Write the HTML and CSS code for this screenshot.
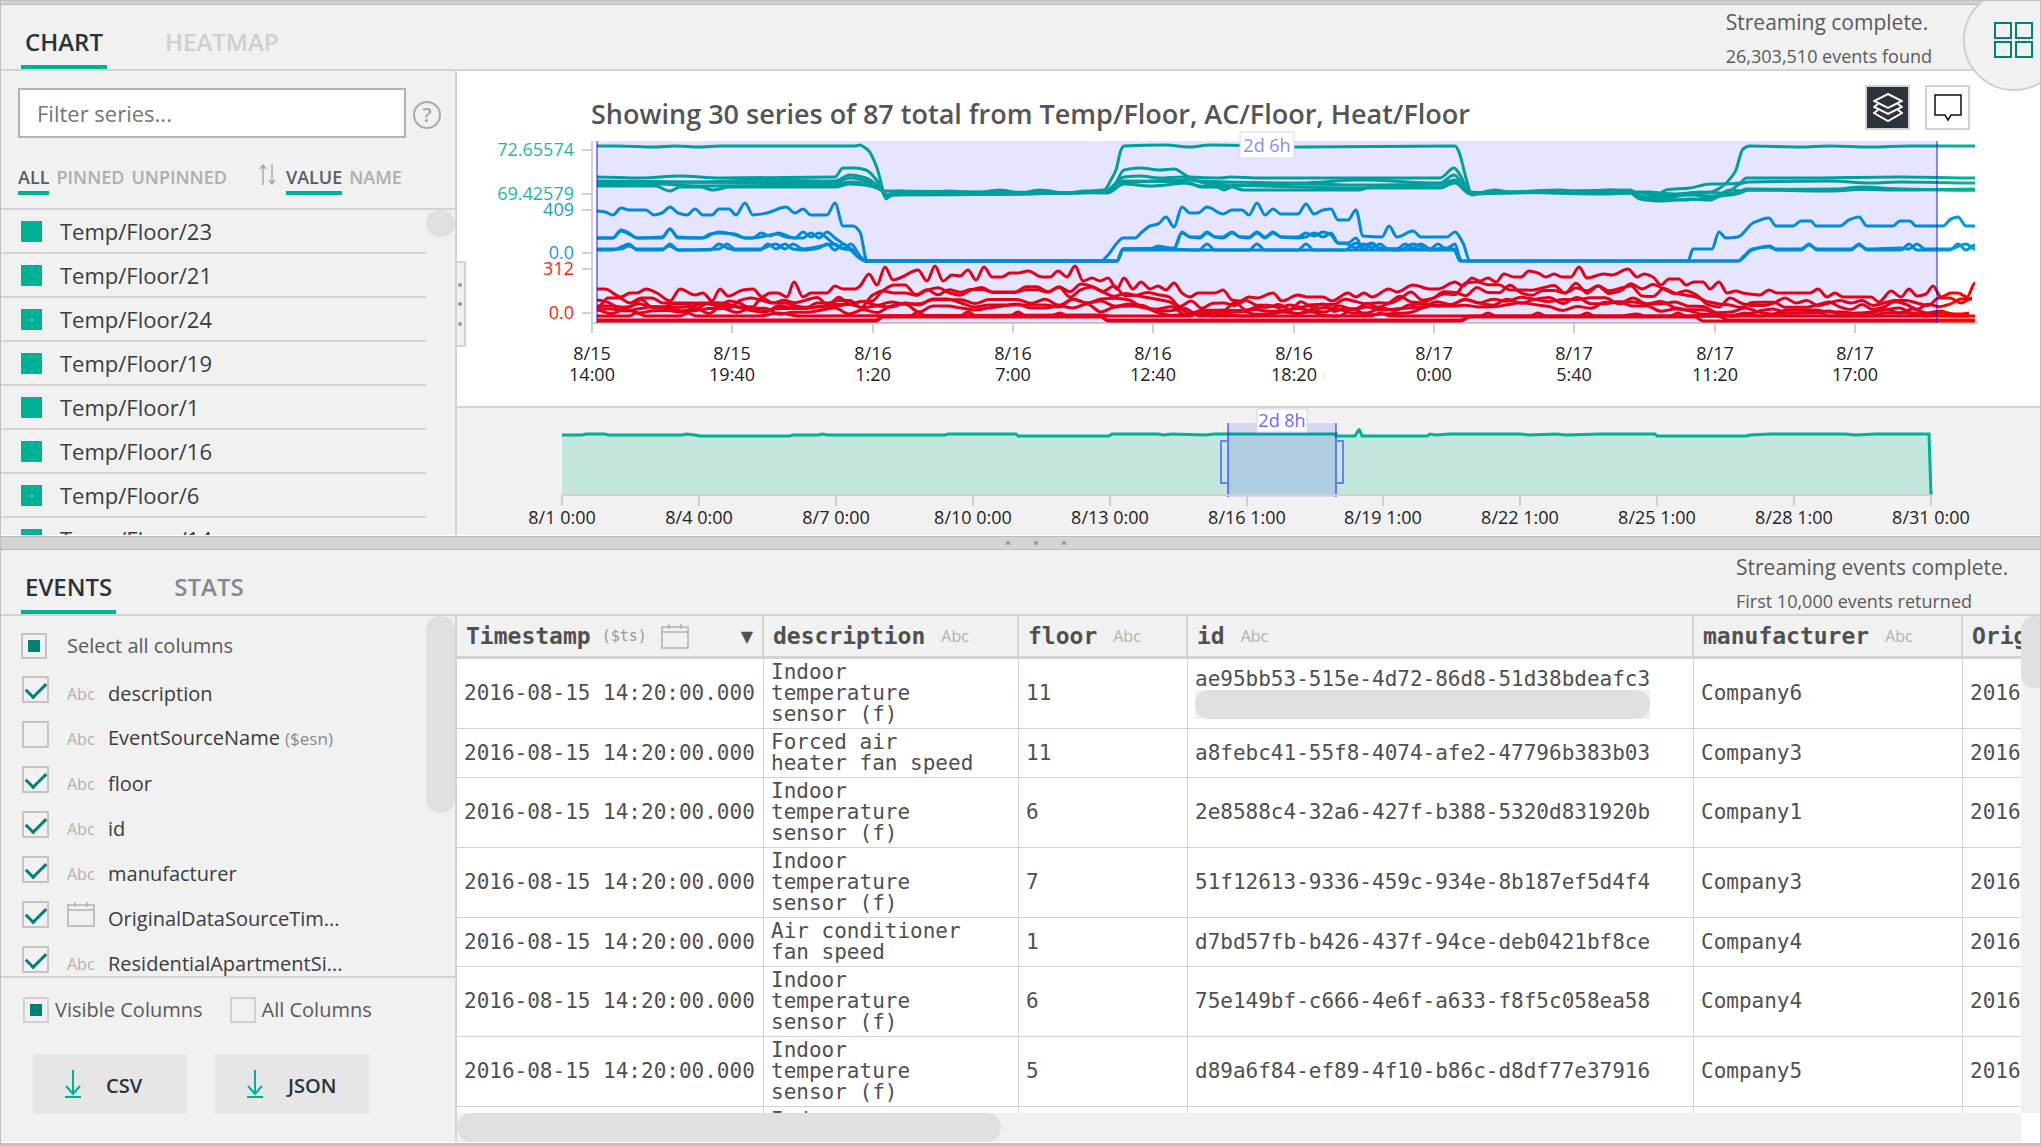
FILE: index.html
```html
<!DOCTYPE html>
<html lang="en">
<head>
<meta charset="utf-8">
<title>Explorer</title>
<link rel="stylesheet" href="styles.css">
</head>
<body>
<svg class="sprite" aria-hidden="true">
  <symbol id="calendar" viewBox="0 0 28 25"><path d="M1 3h26v21H1zM1 8h26M8 0v5M20 0v5"/></symbol>
  <symbol id="download" viewBox="0 0 16 28"><path d="M8 0v24M1 16l7 8 7-8M0 27h16"/></symbol>
</svg>
<div class="app">
  <div class="topbar"></div>
  <section class="pane pane-chart">
    <header class="pane-head">
      <nav class="tabs">
        <button class="tab active">CHART</button>
        <button class="tab faint">HEATMAP</button>
      </nav>
      <div class="status status-chart"><p>Streaming complete.</p><p class="sub">26,303,510 events found</p></div>
    </header>
    <div class="pane-body">
      <aside class="side">
        <div class="search">
          <input type="text" class="filter" placeholder="Filter series..." aria-label="Filter series">
          <button class="help" aria-label="Help">?</button>
        </div>
        <div class="sorts">
          <button class="sort active">ALL</button>
          <button class="sort">PINNED</button>
          <button class="sort">UNPINNED</button>
          <svg class="arrows" viewBox="0 0 18 22"><path d="M4 21V1M1 5l3-4 3 4M13 0v20M10 16l3 4 3-4"/></svg>
          <button class="sort active">VALUE</button>
          <button class="sort">NAME</button>
        </div>
        <div class="scroller">
          <ul class="series">
            <li><i></i>Temp/Floor/23</li>
            <li><i></i>Temp/Floor/21</li>
            <li><i></i>Temp/Floor/24</li>
            <li><i></i>Temp/Floor/19</li>
            <li><i></i>Temp/Floor/1</li>
            <li><i></i>Temp/Floor/16</li>
            <li><i></i>Temp/Floor/6</li>
            <li><i></i>Temp/Floor/14</li>
          </ul>
          <div class="track"><div class="thumb short"></div></div>
        </div>
      </aside>
      <main class="charts">
        <div class="grip"><b></b><b></b><b></b></div>
        <div class="tools">
          <button class="tool dark" aria-label="Stacked"><svg viewBox="0 0 30 30"><path d="M15 1l14 7-14 7-14-7zM5 11l-4 3 14 7 14-7-4-3M5 17l-4 3 14 8 14-8-4-3"/></svg></button>
          <button class="tool" aria-label="Tooltips"><svg viewBox="0 0 28 28"><path d="M1 1h26v20H17l-3 5-3-5H1z"/></svg></button>
        </div>
        <svg id="lines" class="plot" viewBox="457 71 1583 335">
          <text class="title" x="591" y="124">Showing 30 series of 87 total from Temp/Floor, AC/Floor, Heat/Floor</text>
          <path class="axis" d="M592 141V323M592 323H1978"/>
          <g id="curves"></g>
          <rect class="brush" x="597" y="141" width="1340" height="182"/>
          <path class="brush-edge" d="M597 141V323M1937 141V323"/>
          <g class="badge"><rect x="1240" y="132" width="54" height="26"/><text x="1267" y="152">2d 6h</text></g>
        </svg>
        <svg id="overview" class="plot overview" viewBox="457 408 1583 127">
          <path class="area" d="M562 435H698L700 436H790L792 435H1017L1019 436H1110L1112 435H1336V436H1356L1359 430L1362 436H1428L1430 435H1656L1658 436H1746L1748 435H1929L1931 495H562z"/>
          <path class="area-line" d="M562 435H582L586 434H605L608 435H682L686 434L695 435L700 436H790L792 435H818L822 434L828 435H945L948 434H1016L1018 436H1109L1112 434H1158L1164 435L1172 434L1206 435L1214 434H1336V436H1355L1358 431Q1359 428 1360 431L1362 436H1427L1430 434L1436 435L1450 434H1520L1530 435L1556 434L1566 435L1600 434H1655L1657 436H1746L1750 435L1770 434H1845L1855 435L1875 434H1929L1931 495"/>
          <rect class="brush" x="1228" y="423" width="108" height="74"/>
          <path class="brush-edge" d="M1228 423V497M1336 423V497M1228 441H1221V483H1228M1336 441H1343V483H1336"/>
          <g class="badge strong"><rect x="1257" y="409" width="50" height="23"/><text x="1282" y="427">2d 8h</text></g>
        </svg>
      </main>
    </div>
    <button class="corner" aria-label="Layout"><svg viewBox="0 0 40 36"><path d="M1 1h16v15H1zM22 1h16v15H22zM1 20h16v15H1zM22 20h16v15H22z"/></svg></button>
  </section>
  <div class="splitter"><b></b><b></b><b></b></div>
  <section class="pane pane-events">
    <header class="pane-head">
      <nav class="tabs">
        <button class="tab active">EVENTS</button>
        <button class="tab">STATS</button>
      </nav>
      <div class="status status-events"><p>Streaming events complete.</p><p class="sub">First 10,000 events returned</p></div>
    </header>
    <div class="pane-body">
      <aside class="side">
        <div class="scroller">
          <div class="columns">
            <label class="col all"><input type="checkbox" class="box partial">Select all columns</label>
            <label class="col"><input type="checkbox" class="box tick" checked><small>Abc</small><span>description</span></label>
            <label class="col"><input type="checkbox" class="box tick"><small>Abc</small><span>EventSourceName <em>($esn)</em></span></label>
            <label class="col"><input type="checkbox" class="box tick" checked><small>Abc</small><span>floor</span></label>
            <label class="col"><input type="checkbox" class="box tick" checked><small>Abc</small><span>id</span></label>
            <label class="col"><input type="checkbox" class="box tick" checked><small>Abc</small><span>manufacturer</span></label>
            <label class="col"><input type="checkbox" class="box tick" checked><svg class="cal"><use href="#calendar"/></svg><span>OriginalDataSourceTim...</span></label>
            <label class="col"><input type="checkbox" class="box tick" checked><small>Abc</small><span>ResidentialApartmentSi...</span></label>
          </div>
          <div class="track"><div class="thumb long"></div></div>
        </div>
        <div class="export">
          <div class="scope">
            <label><input type="radio" name="scope" class="box" checked>Visible Columns</label>
            <label><input type="radio" name="scope" class="box">All Columns</label>
          </div>
          <div class="downloads">
            <button><svg><use href="#download"/></svg><span>CSV</span></button>
            <button><svg><use href="#download"/></svg><span>JSON</span></button>
          </div>
        </div>
      </aside>
      <div class="grid">
        <div class="grid-view">
          <table>
            <colgroup><col class="c-ts"><col class="c-desc"><col class="c-floor"><col class="c-id"><col class="c-man"><col class="c-orig"></colgroup>
            <thead><tr>
              <th><div>Timestamp<em>($ts)</em><svg class="cal"><use href="#calendar"/></svg><span class="desc">▼</span></div></th>
              <th><div>description<small>Abc</small></div></th>
              <th><div>floor<small>Abc</small></div></th>
              <th><div>id<small>Abc</small></div></th>
              <th><div>manufacturer<small>Abc</small></div></th>
              <th><div>OriginalDataSourceTimestamp</div></th>
            </tr></thead>
            <tbody>
              <tr><td>2016-08-15 14:20:00.000</td><td>Indoor temperature sensor (f)</td><td>11</td><td>ae95bb53-515e-4d72-86d8-51d38bdeafc3<div class="cell-scroll"><div></div></div></td><td>Company6</td><td>2016-08-15 14:20:00.000</td></tr>
              <tr><td>2016-08-15 14:20:00.000</td><td>Forced air heater fan speed</td><td>11</td><td>a8febc41-55f8-4074-afe2-47796b383b03</td><td>Company3</td><td>2016-08-15 14:20:00.000</td></tr>
              <tr><td>2016-08-15 14:20:00.000</td><td>Indoor temperature sensor (f)</td><td>6</td><td>2e8588c4-32a6-427f-b388-5320d831920b</td><td>Company1</td><td>2016-08-15 14:20:00.000</td></tr>
              <tr><td>2016-08-15 14:20:00.000</td><td>Indoor temperature sensor (f)</td><td>7</td><td>51f12613-9336-459c-934e-8b187ef5d4f4</td><td>Company3</td><td>2016-08-15 14:20:00.000</td></tr>
              <tr><td>2016-08-15 14:20:00.000</td><td>Air conditioner fan speed</td><td>1</td><td>d7bd57fb-b426-437f-94ce-deb0421bf8ce</td><td>Company4</td><td>2016-08-15 14:20:00.000</td></tr>
              <tr><td>2016-08-15 14:20:00.000</td><td>Indoor temperature sensor (f)</td><td>6</td><td>75e149bf-c666-4e6f-a633-f8f5c058ea58</td><td>Company4</td><td>2016-08-15 14:20:00.000</td></tr>
              <tr><td>2016-08-15 14:20:00.000</td><td>Indoor temperature sensor (f)</td><td>5</td><td>d89a6f84-ef89-4f10-b86c-d8df77e37916</td><td>Company5</td><td>2016-08-15 14:20:00.000</td></tr>
              <tr><td></td><td>Indoor temperature sensor (f)</td><td></td><td></td><td></td><td></td></tr>
            </tbody>
          </table>
        </div>
        <div class="vtrack"><div></div></div>
        <div class="htrack"><div></div></div>
      </div>
    </div>
  </section>
</div>
<script src="chart.js"></script>
</body>
</html>
```
FILE: styles.css
```css
* { box-sizing: border-box; }
body { margin: 0; font: 20px/28px "Open Sans", "Noto Sans", sans-serif; color: #3c3c3c; background: #f1f1f1; }
button { font: inherit; color: inherit; background: none; border: 0; padding: 0; }
p, ul { margin: 0; padding: 0; }
em, i { font-style: normal; }
svg { display: block; fill: none; }
.sprite { position: absolute; width: 0; height: 0; }

.app { display: flex; flex-direction: column; height: 100vh; overflow: hidden; border: 1px solid #c0c0c0; border-bottom: 3px solid #c0c0c0; }
.topbar { flex: none; height: 4px; background: #d3d3d3; border-bottom: 1px solid #b9b9b9; }
.pane { display: flex; flex-direction: column; border-bottom: 1px solid #fff; }
.pane-chart { flex: none; position: relative; }
.pane-events { flex: 1; min-height: 0; }
.pane-head { display: flex; flex: none; justify-content: space-between; height: 66px; border-bottom: 2px solid #d3d3d3; }
.pane-body { display: flex; flex: 1; min-height: 0; }

.tabs { display: flex; align-items: flex-end; gap: 54px; padding-left: 20px; }
.tab { height: 45px; padding: 0 4px 5px; border-bottom: 4px solid transparent; font-size: 24px; font-weight: 600; line-height: 36px; color: #85888c; text-align: left; }
.tab.active { border-color: #00b294; color: #2b3238; }
.tab.faint { color: #cfcfcf; }
.status { font-size: 21px; line-height: 35px; color: #5a5a5a; }
.status .sub { font-size: 18px; line-height: 32px; }
.status-chart { padding-right: 108px; }
.status-events { width: 304px; }

.side { display: flex; flex-direction: column; flex: none; width: 456px; border-right: 2px solid #d3d3d3; }
.search { display: flex; align-items: center; gap: 7px; padding: 17px 14px 0 17px; }
.filter { flex: 1; min-width: 0; height: 50px; padding: 0 17px; border: 2px solid #b3b3b3; background: #fff; font: inherit; font-size: 22px; border-radius: 0; }
.filter::placeholder { color: #757575; }
.help { width: 28px; height: 28px; margin-top: 3px; border: 2px solid #aaa; border-radius: 50%; color: #a6a6a6; font-size: 20px; font-weight: 600; line-height: 24px; }
.sorts { display: flex; align-items: center; gap: 7px; height: 72px; padding: 3px 0 0 17px; border-bottom: 2px solid #d3d3d3; }
.sort { padding-top: 8px; border-bottom: 4px solid transparent; font-size: 18px; font-weight: 600; line-height: 28px; color: #adaeb0; }
.sort.active { border-color: #00b294; color: #5a5c62; }
.arrows { width: 18px; height: 22px; margin: 0 2px 0 25px; stroke: #a9a9a9; stroke-width: 1.5; }
.scroller { display: flex; flex-grow: 1; height: 0; overflow: hidden; }
.series, .columns { flex: 1; list-style: none; }
.series li { display: flex; align-items: center; gap: 18px; height: 44px; padding-left: 20px; border-bottom: 2px solid #d3d3d3; font-size: 22px; }
.series i { width: 21px; height: 21px; background: #00b294; }
.track { flex: none; width: 29px; }
.thumb { border-radius: 14px; background: #e0e0e0; }
.thumb.short { height: 27px; }
.thumb.long { height: 197px; }

.charts { position: relative; flex: 1; min-width: 0; background: #fff; }
.plot { width: 100%; height: auto; }
.plot text { font-size: 18px; fill: #222; text-anchor: middle; }
.plot .title { font-size: 27px; font-weight: 600; fill: #555; text-anchor: start; }
.plot .ylabel { text-anchor: end; }
.overview { box-sizing: content-box; border-top: 2px solid #d3d3d3; background: #f1f1f1; }
.axis { stroke: #cfcfcf; stroke-width: 2; }
.curve { stroke-width: 3; stroke-linejoin: round; }
.brush { fill: rgba(0, 0, 255, .1); }
.brush-edge { stroke: rgba(0, 0, 255, .45); stroke-width: 2; }
.badge rect { fill: #fff; stroke: #d5d5fb; }
.plot .badge text { fill: #8a8aff; }
.plot .badge.strong text { fill: #6a6aff; }
.area { fill: #c3e6df; }
.area-line { stroke: #00b294; stroke-width: 3; }
.grip { position: absolute; left: 0; top: 190px; display: flex; flex-direction: column; justify-content: space-evenly; width: 9px; height: 86px; padding: 4px 1px; border: 2px solid #d3d3d3; border-left: 0; background: #f1f1f1; }
.grip b, .splitter b { width: 4px; height: 4px; border-radius: 50%; background: #999; }
.tools { position: absolute; right: 70px; top: 14px; display: flex; gap: 15px; }
.tool { display: grid; place-items: center; width: 45px; height: 45px; border: 2px solid #d3d3d3; background: #fff; }
.tool svg { width: 28px; height: 28px; stroke: #111; stroke-width: 1.5; }
.tool.dark { background: #2b333b; }
.tool.dark svg { width: 30px; height: 30px; stroke: #fff; stroke-width: 2; }
.corner { position: absolute; right: -25px; top: -16px; display: grid; place-items: center; width: 102px; height: 102px; border: 2px solid #cfcfcf; border-radius: 50%; background: #f1f1f1; }
.corner svg { width: 40px; height: 36px; stroke: #008272; stroke-width: 2; }

.splitter { display: flex; flex: none; justify-content: center; align-items: center; gap: 24px; height: 14px; padding-left: 30px; border: solid #b9b9b9; border-width: 1px 0; background: #d3d3d3; }

.columns { padding: 9px 0 0 20px; overflow: hidden; }
.col { display: flex; align-items: center; height: 45px; padding-left: 1px; white-space: nowrap; }
.col.all { height: 42px; padding-left: 0; color: #5a5a5a; }
.col.all .box { margin-right: 20px; }
.col span { padding-top: 8px; }
.col small { width: 41px; padding-top: 8px; }
.col em { font-size: 17px; color: #8a8a8a; }
.col .cal { margin-right: 13px; }
small { font-size: 16px; color: #b0b0b0; }
.cal { width: 28px; height: 25px; stroke: #b0b0b0; stroke-width: 1.5; }
.box { flex: none; appearance: none; display: grid; place-items: center; width: 26px; height: 26px; margin: 0; border: 2px solid #c4c4c4; background: transparent; }
.box.tick { width: 27px; height: 27px; margin-right: 18px; }
.box.partial::before, .box[type=radio]:checked::before { content: ""; width: 12px; height: 12px; background: #008272; }
.box.tick:checked::before { content: ""; width: 9px; height: 17px; margin-bottom: 5px; border: solid #008272; border-width: 0 3px 3px 0; transform: rotate(45deg); }
.export { flex: none; height: 166px; border-top: 2px solid #d3d3d3; }
.scope { display: flex; gap: 27px; padding: 18px 0 0 22px; color: #5a5a5a; }
.scope label { display: flex; align-items: center; gap: 6px; }
.scope .box { border-color: #d0d0d0; }
.downloads { display: flex; gap: 28px; padding: 30px 0 0 32px; }
.downloads button { display: flex; align-items: center; gap: 25px; width: 154px; height: 60px; padding-left: 32px; background: #e6e6e6; color: #2b3238; font-weight: 600; }
.downloads span { padding-top: 3px; }
.downloads svg { width: 16px; height: 28px; stroke: #00b294; stroke-width: 2; }

.grid { display: grid; flex: 1; grid-template: minmax(0, 1fr) 29px / minmax(0, 1fr) 19px; min-width: 0; background: #fff; }
.grid-view { overflow: hidden; }
table { width: 1906px; table-layout: fixed; border-spacing: 0; font: 21px/21px "DejaVu Sans Mono", monospace; color: #505050; }
.c-ts { width: 307px; }
.c-desc { width: 255px; }
.c-floor { width: 169px; }
.c-id { width: 506px; }
.c-man { width: 269px; }
.c-orig { width: 400px; }
th { height: 43px; padding: 0 9px; border-right: 2px solid #d3d3d3; border-bottom: 3px solid #d3d3d3; background: #f1f1f1; font-size: 23px; }
th div { display: flex; align-items: center; white-space: nowrap; }
th small { margin-left: 16px; font: 16px "Open Sans", sans-serif; }
th em { margin: 0 14px 0 11px; font: 15px "DejaVu Sans Mono", monospace; color: #9a9a9a; }
th .desc { margin-left: auto; font: 16px "DejaVu Sans", sans-serif; }
td { padding: 3px 7px; border: solid #d3d3d3; border-width: 0 1px 1px 0; }
td:nth-child(2) { padding-right: 35px; }
td:last-child { white-space: nowrap; }
.cell-scroll { width: 455px; height: 29px; background: #f1f1f1; }
.cell-scroll div, .htrack div { height: 100%; border-radius: 14px; background: #e0e0e0; }
.vtrack { overflow: hidden; background: #f1f1f1; }
.vtrack div { width: 28px; height: 72px; border-radius: 14px; background: #e0e0e0; }
.htrack { background: #f1f1f1; }
.htrack div { width: 544px; }
```
FILE: chart.js
```js
const NS = "http://www.w3.org/2000/svg";

function add(parent, tag, attrs, text) {
  const el = document.createElementNS(NS, tag);
  for (const k in attrs) el.setAttribute(k, attrs[k]);
  if (text !== undefined) el.textContent = text;
  parent.appendChild(el);
}

// Monotone cubic interpolation through the points
function smooth(p) {
  const n = p.length, s = [], t = [];
  for (let i = 0; i < n - 1; i++) s.push((p[i + 1][1] - p[i][1]) / (p[i + 1][0] - p[i][0]));
  for (let i = 0; i < n; i++) {
    const a = s[i - 1], b = s[i];
    t.push(a === undefined || b === undefined || a * b <= 0 ? 0 : 2 * a * b / (a + b));
  }
  let d = "M" + p[0];
  for (let i = 0; i < n - 1; i++) {
    const h = (p[i + 1][0] - p[i][0]) / 3;
    d += `C${p[i][0] + h},${p[i][1] + t[i] * h} ${p[i + 1][0] - h},${p[i + 1][1] - t[i + 1] * h} ${p[i + 1]}`;
  }
  return d;
}

const parse = s => s.trim().split(/\s+/).map(v => v.split(",").map(Number));
const curves = document.getElementById("curves");
const draw = (points, stroke) => add(curves, "path", { class: "curve", d: smooth(points), stroke });

const temp = [
  "597,146 616,146 655,147 675,146 700,147 720,146 855,146 860,145 864,147 869,151 877,168 884,194 886,199 890,194 898,191 920,193 950,191 975,193 1000,190 1020,193 1040,190 1065,193 1085,191 1104,190 1112,178 1116,170 1121,150 1124,146 1165,145 1190,147 1210,145 1300,147 1455,146 1459,152 1466,178 1472,195 1480,193 1495,190 1510,192 1535,191 1560,190 1580,192 1610,190 1630,192 1650,193 1680,194 1710,192 1720,188 1735,172 1743,149 1750,146 1800,147 1830,146 1870,147 1910,146 1975,146",
  "597,177 640,178 680,176 720,178 835,177 843,168 855,168 866,170 880,185 886,198 895,194 950,193 1060,193 1105,191 1115,184 1124,170 1140,168 1160,170 1174,169 1190,177 1220,178 1230,177 1260,178 1440,178 1454,168 1460,175 1470,192 1490,193 1560,192 1650,192 1660,193 1666,190 1690,188 1710,184 1725,184 1740,183 1746,178 1800,178 1900,177 1975,178",
  "597,181 700,182 760,180 835,181 850,175 866,178 880,188 886,196 900,193 1000,194 1106,192 1124,177 1140,176 1160,178 1182,177 1200,181 1300,183 1360,180 1440,183 1454,175 1470,193 1500,192 1600,194 1640,193 1660,196 1700,192 1725,193 1740,184 1748,182 1830,181 1870,183 1900,182 1975,183",
  "597,186 655,186 670,191 680,187 700,187 713,190 730,187 835,187 850,184 870,186 884,192 886,195 920,194 1000,194 1108,192 1124,181 1180,182 1200,186 1217,187 1224,190 1232,187 1243,190 1360,190 1370,187 1440,187 1455,183 1470,194 1540,191 1630,193 1640,199 1660,201 1690,199 1710,200 1730,190 1740,191 1746,189 1830,190 1860,187 1900,189 1975,190",
  "597,185 655,184 700,186 835,185 850,182 870,184 884,192 886,195 1108,192 1124,184 1150,186 1190,183 1200,187 1300,184 1360,185 1440,184 1455,180 1470,193 1630,190 1640,196 1660,198 1690,195 1710,196 1730,195 1740,193 1748,190 1840,189 1900,190 1975,189",
  "597,183 650,182 835,183 850,178 870,182 884,191 1108,193 1124,183 1190,180 1210,184 1300,187 1360,188 1440,188 1455,182 1470,193 1630,192 1645,198 1680,200 1710,198 1730,194 1740,191 1748,190 1830,191 1870,189 1975,190"
];
const ac = [
  "597,211 605,212 613,215 621,208 629,210 646,210 654,215 662,213 670,207 678,213 687,215 695,209 703,215 712,215 719,209 729,209 736,215 745,203 753,215 767,213 786,207 795,213 803,209 811,215 827,215 835,203 843,226 853,226 860,232 867,261 1101,261 1108,255 1117,243 1123,238 1135,238 1142,232 1150,226 1158,224 1166,217 1174,227 1182,207 1190,213 1198,213 1207,207 1223,214 1232,210 1242,210 1249,215 1257,203 1265,215 1273,209 1281,214 1298,214 1306,204 1314,214 1323,210 1331,209 1338,220 1348,220 1356,210 1363,236 1382,237 1389,226 1397,237 1413,231 1421,237 1447,237 1455,232 1463,243 1470,261 1688,261 1693,249 1712,249 1719,232 1726,238 1738,237 1753,223 1769,218 1776,226 1793,226 1801,221 1811,221 1816,226 1840,226 1849,220 1859,217 1867,226 1893,226 1900,221 1910,221 1916,226 1943,226 1951,219 1958,217 1966,226 1975,226",
  "597,238 613,238 621,230 629,233 637,238 662,237 670,229 678,237 702,238 719,232 735,235 745,238 753,238 761,233 770,236 778,233 795,238 803,232 811,237 819,233 827,238 835,245 845,249 853,250 866,261 1117,261 1123,249 1174,248 1182,232 1190,237 1200,237 1207,232 1215,237 1223,237 1232,232 1240,237 1249,237 1257,232 1265,237 1273,232 1281,237 1298,237 1306,233 1314,236 1323,232 1331,235 1338,243 1348,243 1356,238 1362,246 1372,243 1380,248 1397,249 1454,249 1462,261",
  "597,238 613,238 621,231 629,234 637,238 662,238 670,229 678,238 702,238 710,234 719,233 735,234 745,238 753,238 777,234 786,237 795,238 803,238 811,233 819,238 827,232 835,238 845,245 866,261 1117,261 1123,249 1174,249 1182,233 1190,237 1200,238 1207,233 1215,237 1223,238 1232,233 1240,237 1249,238 1257,233 1265,238 1273,233 1281,237 1298,238 1306,237 1314,233 1323,237 1331,233 1338,243 1348,244 1356,248 1364,244 1372,248 1380,244 1388,249 1397,249 1405,244 1413,248 1421,244 1430,249 1438,244 1446,249 1455,244 1461,261",
  "597,250 613,250 621,247 629,244 637,250 662,250 670,244 678,250 710,250 719,244 727,248 735,250 760,250 768,244 776,249 785,244 793,249 803,250 819,248 827,244 835,250 843,244 851,249 866,261 1117,261 1123,249 1150,249 1158,246 1174,249 1199,250 1207,244 1215,250 1249,250 1257,244 1265,250 1298,250 1306,244 1314,250 1345,250 1356,243 1364,249 1372,244 1380,249 1400,250 1413,244 1430,250 1446,248 1455,250 1462,261 1738,261 1752,250 1770,246 1776,250 1801,250 1809,244 1817,250 1851,250 1859,244 1867,250 1901,250 1909,244 1917,250 1950,250 1958,244 1966,250 1975,245",
  "597,249 613,249 621,249 629,246 637,249 662,249 670,246 678,250 719,249 727,244 735,249 760,249 776,244 785,249 793,244 803,249 835,244 843,249 851,244 860,256 866,261 1117,261 1123,250 1454,250 1460,261 1738,261 1744,256 1752,249 1769,247 1776,249 1801,249 1809,245 1817,249 1851,249 1859,245 1867,249 1901,248 1909,249 1917,244 1925,249 1950,249 1966,244 1975,249"
];
const heat = [
  "597,289 605,289 621,297 630,293 637,293 646,289 657,293 670,301 680,289 695,295 703,293 712,301 720,289 728,296 743,290 753,289 762,297 770,293 778,293 787,297 794,282 803,297 811,293 827,293 835,286 843,289 855,289 860,286 869,274 877,285 885,267 893,280 902,277 918,270 927,281 935,266 943,281 952,275 960,276 968,270 976,280 984,267 992,277 1002,277 1010,273 1018,273 1028,271 1042,277 1050,277 1058,271 1067,277 1075,266 1083,281 1092,278 1100,281 1108,278 1117,289 1124,278 1133,289 1141,282 1150,289 1158,286 1166,290 1174,283 1182,293 1190,297 1198,293 1215,293 1223,290 1232,300 1240,301 1249,297 1257,298 1273,293 1282,301 1298,295 1307,297 1323,297 1332,301 1348,293 1356,297 1364,293 1372,297 1389,289 1397,292 1413,285 1430,289 1438,289 1455,282 1463,286 1472,278 1480,281 1488,278 1496,282 1504,274 1514,277 1521,277 1529,271 1538,273 1546,277 1554,274 1562,277 1571,277 1579,267 1587,278 1604,274 1612,275 1628,269 1637,277 1644,274 1653,277 1661,285 1669,279 1679,279 1686,285 1694,282 1703,282 1710,289 1719,282 1727,293 1736,291 1743,293 1760,295 1769,290 1777,293 1810,293 1818,289 1827,297 1835,293 1843,297 1871,297 1879,302 1891,291 1901,297 1909,289 1917,296 1926,294 1933,286 1941,297 1951,293 1958,293 1967,297 1975,283",
  "597,320 876,320 883,316 910,316 918,312 926,316 960,316 968,312 976,316 1010,316 1018,312 1026,316 1050,316 1060,313 1068,316 1101,316 1108,320 1461,320 1470,316 1480,316 1488,313 1496,316 1530,316 1538,313 1546,316 1579,316 1587,313 1595,316 1620,316 1637,314 1645,316 1670,316 1678,313 1686,316 1718,316 1728,320 1975,320",
  "597,316 629,316 637,313 645,316 680,316 688,313 696,316 760,316 778,313 800,316 1100,315 1110,316 1190,316 1200,313 1215,316 1371,316 1380,313 1390,316 1975,316",
  "597,321 876,321 883,317 1101,317 1108,321 1461,321 1470,317 1695,317 1703,321 1975,321"
];

// Low-amplitude series: typical level in each stretch of the day, with a small seeded jitter
const stops = [597, 860, 884, 1104, 1190, 1370, 1470, 1650, 1725, 1975];
const levels = [
  [305, 302, 290, 289, 306, 304, 287, 289, 303, 303],
  [303, 303, 293, 292, 308, 306, 290, 291, 305, 304],
  [308, 306, 302, 301, 311, 307, 299, 300, 312, 312],
  [312, 306, 303, 303, 313, 311, 301, 302, 313, 313],
  [311, 310, 308, 308, 315, 313, 307, 306, 315, 315]
];
let seed = 17;
const rand = () => (seed = (seed * 16807) % 2147483647) / 2147483647;

const teal = "#00b294", blue = "#009ad6", red = "#ff0000";
temp.forEach(s => draw(parse(s), teal));
ac.forEach(s => draw(parse(s), blue));
heat.forEach(s => draw(parse(s), red));
levels.forEach((lv, k) => {
  const pts = [], amp = k < 2 ? 5 : 4, step = k < 2 ? 11 : 14;
  for (let x = 597; x < 1976; x += step) {
    let i = 0;
    while (i < stops.length - 2 && x > stops[i + 1]) i++;
    const f = (x - stops[i]) / (stops[i + 1] - stops[i]);
    const base = lv[i] + (lv[i + 1] - lv[i]) * f;
    pts.push([x, Math.min(316, base + (Math.round(rand() * 4) / 2 - 1) * amp)]);
  }
  draw(pts, red);
});

const lines = document.getElementById("lines");
const label = (svg, x, y, text, fill, cls) => add(svg, "text", fill ? { x, y, class: cls, style: "fill:" + fill } : { x, y }, text);
[[150, "72.65574", "#1fb89d"], [194, "69.42579", "#1fb89d"], [210, "409", "#1a9bd0"],
 [253, "0.0", "#1a9bd0"], [269, "312", "#ff2020"], [313, "0.0", "#ff2020"]].forEach(([y, t, c]) => {
  add(lines, "path", { class: "axis", d: `M582 ${y}H592` });
  label(lines, 574, y + 6, t, c, "ylabel");
});
["8/15 14:00", "8/15 19:40", "8/16 1:20", "8/16 7:00", "8/16 12:40", "8/16 18:20", "8/17 0:00", "8/17 5:40", "8/17 11:20", "8/17 17:00"].forEach((t, i) => {
  const x = Math.round(592 + i * 140.35), [d, h] = t.split(" ");
  add(lines, "path", { class: "axis", d: `M${x} 323V333` });
  label(lines, x, 360, d);
  label(lines, x, 381, h);
});
const overview = document.getElementById("overview");
add(overview, "path", { class: "axis", d: "M562 495H1931" });
["8/1 0:00", "8/4 0:00", "8/7 0:00", "8/10 0:00", "8/13 0:00", "8/16 1:00", "8/19 1:00", "8/22 1:00", "8/25 1:00", "8/28 1:00", "8/31 0:00"].forEach((t, i) => {
  const x = Math.round(562 + i * 136.9);
  add(overview, "path", { class: "axis", d: `M${x} 495V506` });
  label(overview, x, 524, t);
});
```
